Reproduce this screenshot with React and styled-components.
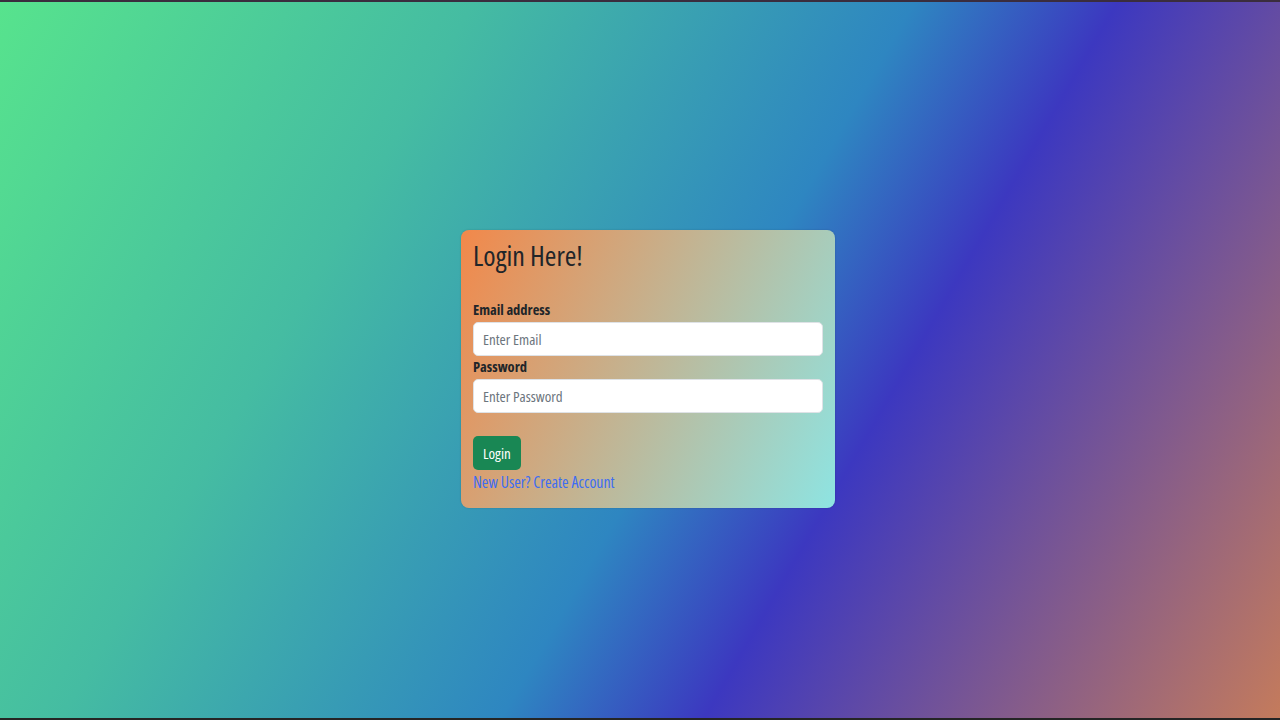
import React from 'react';
import styled, { createGlobalStyle } from 'styled-components';

const GlobalStyle = createGlobalStyle`
  * {
    box-sizing: border-box;
  }
  body {
    margin: 0;
    font-family: "Open Sans", Lato, sans-serif;
    font-stretch: 75%;
  }
`;

const Page = styled.div`
  height: 720px;
  padding-left: 16px;
  border-top: 2px solid #3a2d3e;
  border-bottom: 2px solid #252525;
  background: linear-gradient(
    120deg,
    #57e38d 0%,
    #45bca2 28%,
    #2e86c1 54%,
    #3c38c0 66%,
    #c47b5c 100%
  );
  display: flex;
  align-items: center;
  justify-content: center;
`;

const Card = styled.form`
  width: 374px;
  margin-top: 18px;
  padding: 8px 12px 16px;
  border-radius: 8px;
  background: linear-gradient(115deg, #f2884a 0%, #8ee4e2 100%);
  box-shadow: 0 0 2px rgba(0, 0, 0, 0.2);
  display: flex;
  flex-direction: column;
`;

const Title = styled.h3`
  margin: 0 0 28px;
  font-size: 28px;
  font-weight: 400;
  line-height: 34px;
  color: #212529;
`;

const Label = styled.label`
  display: block;
  font-size: 14.5px;
  font-weight: 700;
  line-height: 20px;
  color: #212529;
  margin-bottom: 2px;
`;

const Input = styled.input`
  width: 100%;
  height: 34px;
  padding: 0 9px;
  margin-bottom: ${(p) => p.$gap || 0}px;
  border: 1px solid #dee2e6;
  border-radius: 5px;
  background: #fff;
  font-family: inherit;
  font-stretch: inherit;
  font-size: 15px;
  color: #212529;
  &::placeholder {
    color: #6c757d;
  }
`;

const Button = styled.button`
  align-self: flex-start;
  height: 34px;
  padding: 0 10px;
  margin-top: 23px;
  border: none;
  border-radius: 5px;
  background: #198754;
  color: #fff;
  font-family: inherit;
  font-stretch: inherit;
  font-size: 15px;
  cursor: pointer;
`;

const Link = styled.a`
  margin-top: 2px;
  font-size: 15.8px;
  line-height: 20px;
  color: #3d6df2;
  text-decoration: none;
`;

export default function App() {
  return (
    <>
      <GlobalStyle />
      <Page>
        <Card onSubmit={(e) => e.preventDefault()}>
          <Title>Login Here!</Title>
          <Label htmlFor="email">Email address</Label>
          <Input id="email" type="email" placeholder="Enter Email" $gap={1} />
          <Label htmlFor="password">Password</Label>
          <Input id="password" type="password" placeholder="Enter Password" />
          <Button type="submit">Login</Button>
          <Link href="#">New User? Create Account</Link>
        </Card>
      </Page>
    </>
  );
}
